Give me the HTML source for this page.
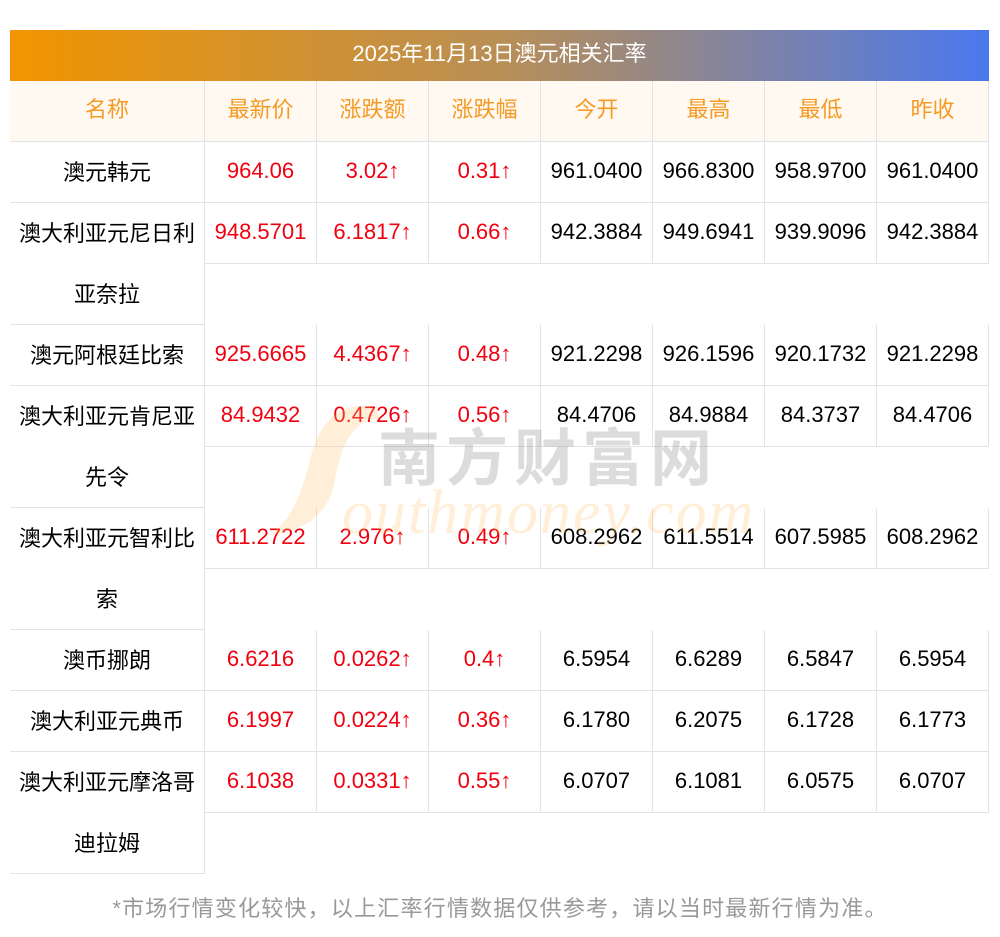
<!DOCTYPE html>
<html><head><meta charset="utf-8"><style>
body{margin:0;width:1000px;height:937px;background:#fff;position:relative;font-family:"Liberation Sans","Noto Sans CJK SC",sans-serif;overflow:hidden}
.t{position:absolute;left:10px;top:30px;width:979px;height:51px;background:linear-gradient(90deg,#f29500,#b98f55 50%,#4a78ee);color:#fff;font-size:22px;text-align:center;line-height:48px}
.c{position:absolute;box-sizing:border-box;border-right:1px solid #e2e2ea;border-bottom:1px solid #e2e2ea;text-align:center;font-size:22px;line-height:57px;color:#000;white-space:nowrap}
.h{background:#fff9f2;color:#f59a23}
.r{color:#f0000f}
.n{line-height:61px}
.wm{position:absolute;pointer-events:none}
.ft{position:absolute;top:891px;left:0;width:1000px;text-align:center;color:#999;font-size:22px;letter-spacing:1.2px}
</style></head><body>
<div class="t">2025年11月13日澳元相关汇率</div>
<div id="g"></div>
<div class="wm" style="left:270px;top:400px;width:110px;height:140px;">
<svg width="110" height="140"><path d="M105 8 C70 0 50 20 40 60 C30 100 20 120 0 135 C40 130 60 110 65 80 C72 40 85 20 110 18 Z" fill="rgba(255,190,100,0.25)"/></svg></div>
<div class="wm" style="left:378px;top:408px;font-size:62px;color:rgba(140,140,140,0.3);letter-spacing:6px;font-weight:bold">南方财富网</div>
<div class="wm" style="left:342px;top:478px;font-size:62px;color:rgba(255,190,100,0.25);font-family:'Liberation Serif',serif;font-style:italic;letter-spacing:2px">outhmoney.com</div>
<div class="ft">*市场行情变化较快，以上汇率行情数据仅供参考，请以当时最新行情为准。</div>
<script>
var xs=[10,205,317,429,541,653,765,877,989];
var rows=[
["澳元韩元",142,61,["964.06","3.02↑","0.31↑","961.0400","966.8300","958.9700","961.0400"]],
["澳大利亚元尼日利<br>亚奈拉",203,122,["948.5701","6.1817↑","0.66↑","942.3884","949.6941","939.9096","942.3884"]],
["澳元阿根廷比索",325,61,["925.6665","4.4367↑","0.48↑","921.2298","926.1596","920.1732","921.2298"]],
["澳大利亚元肯尼亚<br>先令",386,122,["84.9432","0.4726↑","0.56↑","84.4706","84.9884","84.3737","84.4706"]],
["澳大利亚元智利比<br>索",508,122,["611.2722","2.976↑","0.49↑","608.2962","611.5514","607.5985","608.2962"]],
["澳币挪朗",630,61,["6.6216","0.0262↑","0.4↑","6.5954","6.6289","6.5847","6.5954"]],
["澳大利亚元典币",691,61,["6.1997","0.0224↑","0.36↑","6.1780","6.2075","6.1728","6.1773"]],
["澳大利亚元摩洛哥<br>迪拉姆",752,122,["6.1038","0.0331↑","0.55↑","6.0707","6.1081","6.0575","6.0707"]]];
var h=["名称","最新价","涨跌额","涨跌幅","今开","最高","最低","昨收"],s="";
function cell(i,top,ht,txt,cls){return '<div class="c '+cls+'" style="left:'+xs[i]+'px;top:'+top+'px;width:'+(xs[i+1]-xs[i])+'px;height:'+ht+'px">'+txt+'</div>';}
for(var i=0;i<8;i++)s+=cell(i,81,61,h[i],"h");
rows.forEach(function(r){s+=cell(0,r[1],r[2],r[0],"n");for(var i=1;i<8;i++)s+=cell(i,r[1],61,r[3][i-1],i<4?"r":"");});
document.getElementById("g").innerHTML=s;
</script>
</body></html>
